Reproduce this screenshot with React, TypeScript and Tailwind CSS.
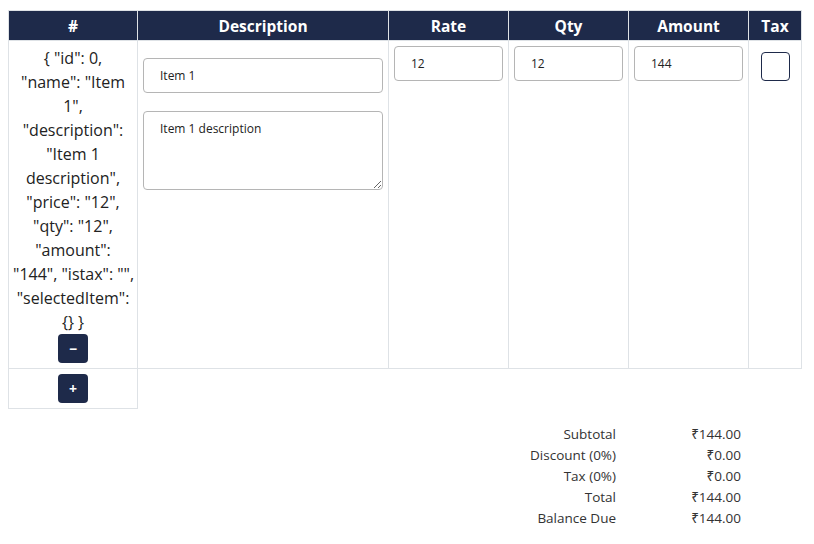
const item = {
  id: 0,
  name: "Item 1",
  description: "Item 1 description",
  price: "12",
  qty: "12",
  amount: "144",
};

// the row's JSON dump, broken where the reference wraps it
const jsonLines = [
  '{ "id": 0,',
  '"name": "Item',
  '1",',
  '"description":',
  '"Item 1',
  'description",',
  '"price": "12",',
  '"qty": "12",',
  '"amount":',
  '"144", "istax": "",',
  '"selectedItem":',
  "{} }",
];

const totals = [
  { label: "Subtotal", value: "₹144.00" },
  { label: "Discount (0%)", value: "₹0.00" },
  { label: "Tax (0%)", value: "₹0.00" },
  { label: "Total", value: "₹144.00" },
  { label: "Balance Due", value: "₹144.00" },
];

const inputCls =
  "block w-full h-[35px] rounded-[4px] border border-[#b5b5b5] bg-white pl-[16px] text-[12px] text-[#222] outline-none";

export default function App() {
  return (
    <div
      className="min-h-screen bg-white text-[#333]"
      style={{ fontFamily: '"Open Sans", "Noto Sans", sans-serif' }}
    >
      <div className="pt-[10px] pl-[8px]">
        <table className="w-[793px] table-fixed border-collapse">
          <colgroup>
            <col className="w-[129px]" />
            <col className="w-[251px]" />
            <col className="w-[120px]" />
            <col className="w-[120px]" />
            <col className="w-[120px]" />
            <col className="w-[53px]" />
          </colgroup>
          <thead>
            <tr className="bg-[#1e2a4a] text-white">
              {["#", "Description", "Rate", "Qty", "Amount", "Tax"].map((h) => (
                <th
                  key={h}
                  className="h-[30px] border border-[#dee2e6] p-0 text-center text-[15.5px] font-bold leading-[20px]"
                >
                  {h}
                </th>
              ))}
            </tr>
          </thead>
          <tbody>
            <tr>
              <td className="border border-[#dee2e6] px-[4px] pt-[5px] pb-[5px] align-top">
                <div className="text-center text-[16px] leading-[24px] text-[#222]">
                  {jsonLines.map((l, i) => (
                    <div key={i} className="whitespace-nowrap">
                      {l}
                    </div>
                  ))}
                </div>
                <div className="flex justify-center">
                  <button className="flex h-[29px] w-[30px] items-center justify-center rounded-[4px] bg-[#1e2a4a] text-[14px] font-bold text-white">
                    −
                  </button>
                </div>
              </td>
              <td className="border border-[#dee2e6] px-[5px] pt-[17px] align-top">
                <input className={inputCls} defaultValue={item.name} />
                <textarea
                  className="mt-[18px] block h-[79px] w-full resize-y rounded-[4px] border border-[#b5b5b5] bg-white pl-[16px] pt-[8px] text-[12px] text-[#222] outline-none"
                  defaultValue={item.description}
                />
              </td>
              <td className="border border-[#dee2e6] px-[5px] pt-[5px] align-top">
                <input className={inputCls} defaultValue={item.price} />
              </td>
              <td className="border border-[#dee2e6] px-[5px] pt-[5px] align-top">
                <input className={inputCls} defaultValue={item.qty} />
              </td>
              <td className="border border-[#dee2e6] px-[5px] pt-[5px] align-top">
                <input className={inputCls} defaultValue={item.amount} />
              </td>
              <td className="border border-[#dee2e6] pt-[11px] align-top">
                <div className="mx-auto h-[29px] w-[29px] rounded-[4px] border border-[#1e2a4a] bg-white" />
              </td>
            </tr>
            <tr>
              <td className="border border-[#dee2e6] pt-[5px] pb-[5px]">
                <div className="flex justify-center">
                  <button className="flex h-[29px] w-[30px] items-center justify-center rounded-[4px] bg-[#1e2a4a] text-[14px] font-bold text-white">
                    +
                  </button>
                </div>
              </td>
              <td colSpan={5} className="border-t border-[#dee2e6]" />
            </tr>
          </tbody>
        </table>
      </div>

      <div className="mt-[15px] flex justify-end pr-[73px]">
        <div className="grid grid-cols-[auto_125px] text-[13.5px] leading-[21px] text-[#333]">
          {totals.map((t) => (
            <div key={t.label} className="contents">
              <div className="text-right">{t.label}</div>
              <div className="text-right">{t.value}</div>
            </div>
          ))}
        </div>
      </div>
    </div>
  );
}
